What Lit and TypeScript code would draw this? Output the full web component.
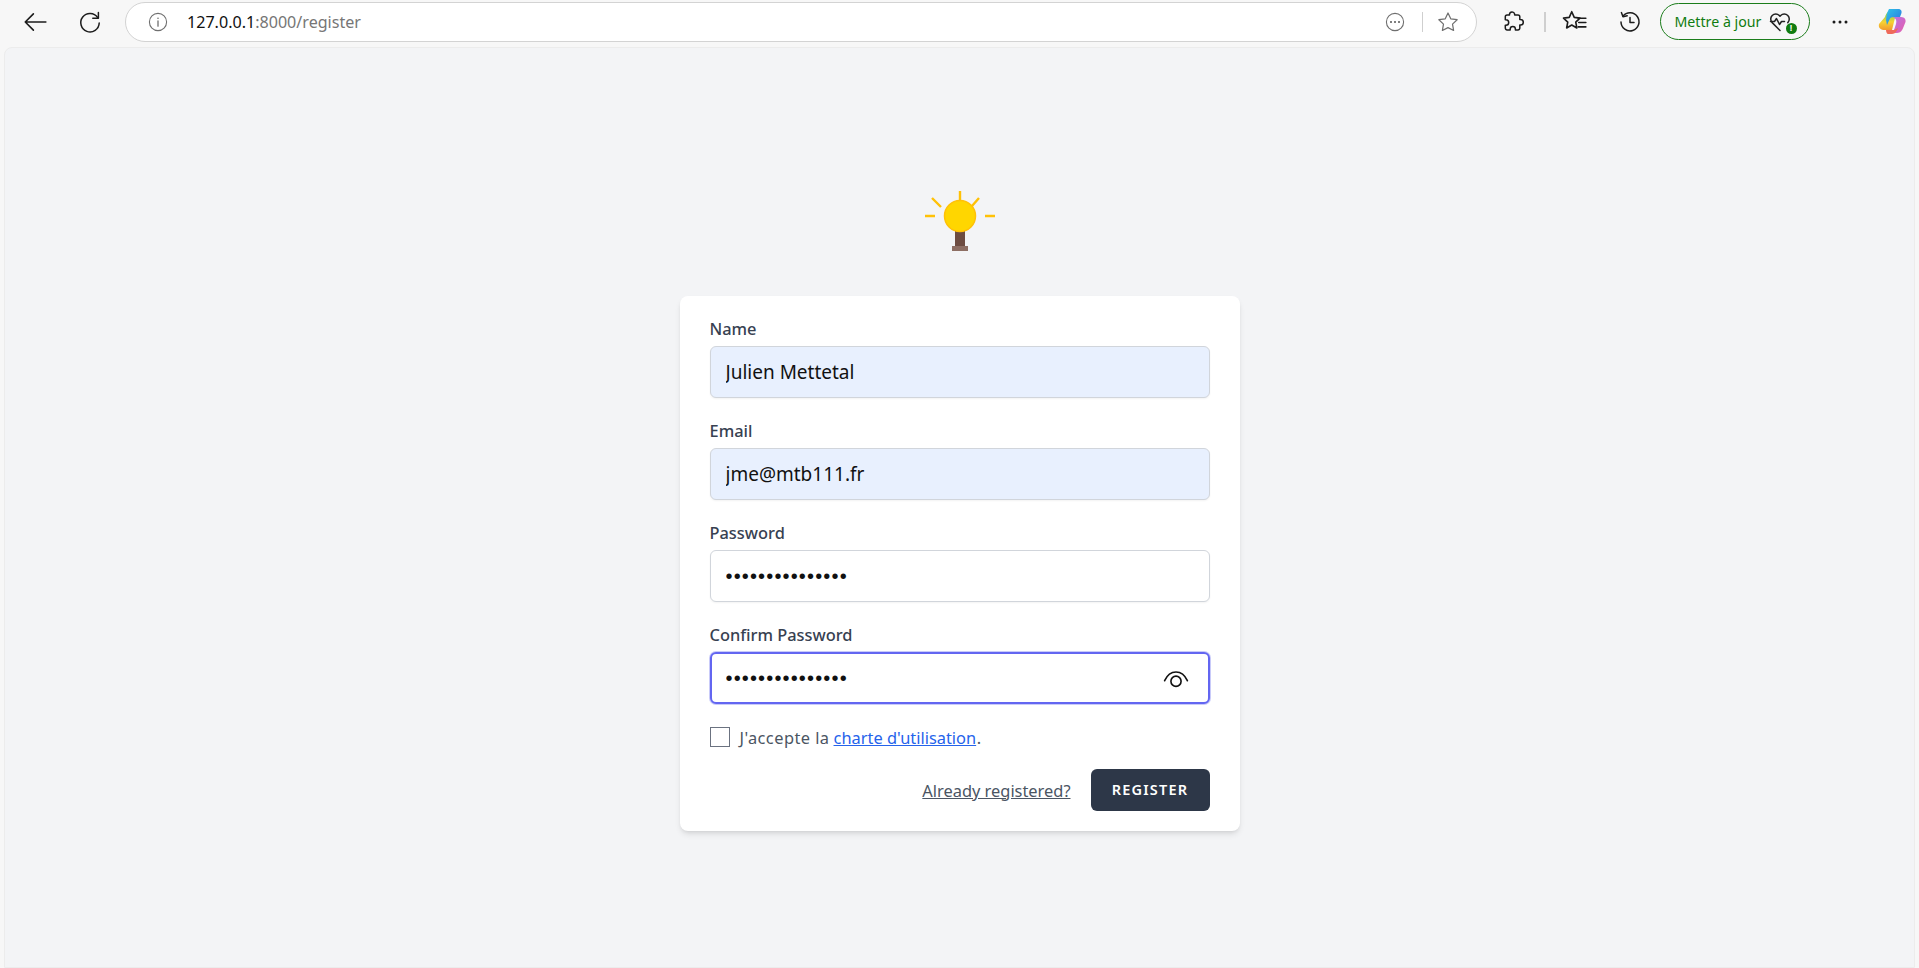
import { html, css, LitElement, svg } from "lit";
import { customElement } from "lit/decorators.js";

const stroke = (body: unknown, size = 24, box = "0 0 24 24") => html`<svg width=${size} height=${size} viewBox=${box} fill="none" stroke="currentColor" stroke-width="1.5" stroke-linecap="round" stroke-linejoin="round">${body}</svg>`;

const icons = {
  back: svg`<path d="M22 12H3M10.500 4.500 3 12l7.500 7.500"/>`,
  reload: svg`<path d="M19.600 7.500A9.200 9.200 0 1 0 21.200 13"/><path d="M20.400 2.600v5.600h-5.600"/>`,
  info: svg`<circle cx="10" cy="10" r="8.600" stroke="#6f6f6f" stroke-width="1.100"/><path d="M10 9v5.200" stroke="#6f6f6f" stroke-width="1.300"/><circle cx="10" cy="6.200" r=".8" fill="#6f6f6f" stroke="none"/>`,
  more: svg`<circle cx="10" cy="10" r="8.600" stroke="#6f6f6f" stroke-width="1.100"/><circle cx="6" cy="10" r="1" fill="#555" stroke="none"/><circle cx="10" cy="10" r="1" fill="#555" stroke="none"/><circle cx="14" cy="10" r="1" fill="#555" stroke="none"/>`,
  star: svg`<path d="m10 1.800 2.500 5.300 5.800.8-4.200 4 1 5.800L10 15.100l-5.100 2.600 1-5.800-4.200-4 5.800-.8z" stroke="#6f6f6f" stroke-width="1.100"/>`,
  puzzle: svg`<path d="M8.500 4.200a2.600 2.600 0 0 1 5.100-.3l.1 1.100h3.300a1.800 1.800 0 0 1 1.800 1.800v2.700h.7a2.800 2.800 0 0 1 0 5.600h-.7v3a1.800 1.800 0 0 1-1.800 1.800h-2.600v-.8a2.600 2.600 0 0 0-5.200 0v.8H6.100a1.800 1.800 0 0 1-1.800-1.800v-2.800h.6a2.800 2.800 0 0 0 0-5.600h-.6V6.800A1.800 1.800 0 0 1 6.100 5h2.400z"/>`,
  favs: svg`<path d="m9 2.500 2.300 5.200 5.300.7-3.900 3.700 1 5.400L9 14.800l-4.700 2.700 1-5.400-3.900-3.700 5.300-.7z"/><path d="M15 8.500h7M15.500 12.500H22M15 16.500h7"/>`,
  history: svg`<path d="M5 6.200A9 9 0 1 1 3 12"/><path d="M3.400 2.600 5 6.800l4.200-1"/><path d="M12 7.500V12.600h4"/>`,
  eye: svg`<path d="M1.500 14.500C4 9 7.500 6.500 12 6.500s8 2.500 10.500 8"/><circle cx="12" cy="15" r="4.700"/>`,
  heart: svg`<path d="M12 20.500 4.200 12.600A5 5 0 0 1 11.300 5.500l.7.8.7-.8a5 5 0 0 1 7.100 7.100"/><path d="M2.500 11.500h4l2-3 3 6 2-3h3"/>`,
};

@customElement("app-root")
export class AppRoot extends LitElement {
  static styles = css`
    :host { display: block; height: 968px; overflow: hidden; background: #f7f7f7; font-family: "Noto Sans", sans-serif; }
    .toolbar { height: 47px; box-sizing: border-box; padding-bottom: 4px; display: flex; align-items: center; color: #1c1c1c; }
    .nav { width: 36px; height: 36px; display: flex; align-items: center; justify-content: center; flex: none; }
    .back { margin-left: 17px; }
    .reload { margin-left: 19px; }
    .address { flex: none; width: 1352px; height: 40px; box-sizing: border-box; margin: 0 0 0 17px; border: 1.5px solid #d3d3d3; border-radius: 20px; background: #fff; display: flex; align-items: center; padding: 0 17px 0 22px; font-size: 16.1px; }
    .url { margin-left: 19px; flex: 1; color: #111; }
    .url span { color: #767676; }
    .sep { width: 1.5px; height: 20px; background: #cfcfcf; margin: 0 14px 0 17px; flex: none; }
    .ext { margin-left: 18px; }
    .tool-sep { margin: 0 11px 0 13px; }
    .history { margin-left: 19px; }
    .update { flex: none; margin-left: 12px; width: 150px; height: 37px; box-sizing: border-box; border: 1.5px solid #1b7d1b; border-radius: 19px; display: flex; align-items: center; gap: 7px; padding-left: 14px; color: #107c10; font-size: 14.2px; position: relative; }
    .update svg { color: #222; }
    .badge { position: absolute; left: 125px; top: 19px; width: 11px; height: 11px; border-radius: 50%; background: #107c10; color: #fff; font: 700 9px/11px "Liberation Sans", sans-serif; text-align: center; }
    .more { margin-left: 12px; }
    .copilot { margin-left: 20px; display: flex; }
    .page { height: 921px; box-sizing: border-box; margin: 0 4px; background: #f3f4f6; border: 1px solid #ececec; border-radius: 8px 8px 0 0; display: flex; flex-direction: column; align-items: center; padding-top: 140px; }
    .logo { display: block; }
    .card { width: 560px; height: 535px; box-sizing: border-box; margin-top: 44px; padding: 22px 30px 0; background: #fff; border-radius: 8px; box-shadow: 0 4px 6px -1px rgba(0,0,0,.1), 0 2px 4px -2px rgba(0,0,0,.1); }
    label.name { display: block; height: 26px; font-size: 16.4px; font-weight: 500; line-height: 22px; color: #374151; }
    .field { display: block; position: relative; height: 52px; margin-bottom: 22px; margin-top: 2px; }
    input.text { display: block; width: 100%; height: 100%; box-sizing: border-box; border: 1px solid #d1d5db; border-radius: 6px; padding: 0 15px; outline: none; font: 19px "Noto Sans", sans-serif; color: #111; background: #fff; box-shadow: 0 1px 2px rgba(0,0,0,.05); }
    input.filled { background: #e8f0fe; }
    input[type="password"] { font-size: 20px; letter-spacing: 1.15px; font-family: "Liberation Sans", sans-serif; }
    input.focus { border: 2px solid #6366f1; padding: 0 14px; box-shadow: 0 0 0 1px #c9cbf9; }
    .eye { position: absolute; right: 9px; top: 0; bottom: 0; width: 50px; display: flex; align-items: center; justify-content: center; color: #111; }
    .terms { display: flex; align-items: center; height: 22px; font-size: 16.4px; color: #4b5563; }
    .box { width: 20px; height: 20px; box-sizing: border-box; border: 1px solid #6b7280; margin-right: 10px; }
    .lead { letter-spacing: .45px; }
    .terms a { color: #2563eb; margin-left: 4px; margin-right: .5px; text-decoration: underline; }
    .actions { display: flex; justify-content: flex-end; align-items: center; margin-top: 21px; }
    .login { color: #4b5563; font-size: 16.4px; text-decoration: underline; margin-right: 20px; }
    .submit { width: 119px; height: 42px; border: 0; border-radius: 6px; background: #2d3748; color: #fff; font: 600 14.5px "Noto Sans", sans-serif; letter-spacing: 1.2px; padding: 0 0 2px; }
  `;

  render() {
    return html`
      <div class="toolbar">
        <div class="nav back">${stroke(icons.back, 26)}</div>
        <div class="nav reload">${stroke(icons.reload, 24)}</div>
        <div class="address">
          ${stroke(icons.info, 20, "0 0 20 20")}
          <div class="url">127.0.0.1<span>:8000/register</span></div>
          ${stroke(icons.more, 20, "0 0 20 20")}
          <div class="sep"></div>
          ${stroke(icons.star, 22, "0 0 20 20")}
        </div>
        <div class="nav ext">${stroke(icons.puzzle, 24)}</div>
        <div class="sep tool-sep"></div>
        <div class="nav">${stroke(icons.favs, 26)}</div>
        <div class="nav history">${stroke(icons.history, 24)}</div>
        <div class="update">
          <span>Mettre à jour</span>
          ${stroke(icons.heart, 24)}
          <span class="badge">!</span>
        </div>
        <div class="nav more">
          <svg width="16" height="4" viewBox="0 0 16 4" fill="#1c1c1c"><circle cx="2" cy="2" r="1.500"/><circle cx="8" cy="2" r="1.500"/><circle cx="14" cy="2" r="1.500"/></svg>
        </div>
        <div class="copilot">
          <svg width="28" height="28" viewBox="0 0 28 28">
            <defs>
              <linearGradient id="cA" x1="0" y1="0" x2="1" y2="1"><stop offset="0" stop-color="#2fc4e8"/><stop offset="1" stop-color="#2b6fe0"/></linearGradient>
              <linearGradient id="cB" x1="0" y1="0" x2="0" y2="1"><stop offset="0" stop-color="#4fc96a"/><stop offset=".6" stop-color="#f6d333"/><stop offset="1" stop-color="#f29a2e"/></linearGradient>
              <linearGradient id="cC" x1="0" y1="0" x2="1" y2="1"><stop offset="0" stop-color="#b873e6"/><stop offset="1" stop-color="#e85da8"/></linearGradient>
            </defs>
            <path d="M7 9c1-3 3-7 7-7h5l-5 20H7c-4 0-7-2-6-6z" fill="url(#cB)"/>
            <path d="M11 1h9c3 0 4 2 3.500 4L22 9h-7c-2 0-3 1-3.500 2.500L9 17l-1-5c.5-4 1-8 3-11z" fill="url(#cA)"/>
            <path d="M15 9h8c4 0 5 3 4.500 5l-2 5c-1 3-3 6-6.500 6h-4l3-9c.5-2 1-5-3-7z" fill="url(#cC)"/>
            <path d="M8 22h8l4-2c-1 3-3 6-6 6H10c-1 0-2-2-2-4z" fill="#ef6a5a"/>
          </svg>
        </div>
      </div>
      <main class="page">
        <svg class="logo" width="80" height="64" viewBox="920 188 80 64">
          <g stroke="#ffc107" stroke-width="2.400">
            <path d="M960 191v9M925 216h10M985 216h10M932 198l9 9M979 198l-7 8"/>
          </g>
          <rect x="955" y="230" width="10" height="17" fill="#6d4c41"/>
          <rect x="952" y="246" width="16" height="5" fill="#8d6e63"/>
          <circle cx="960" cy="216" r="15.500" fill="#ffd600" stroke="#ffc107" stroke-width="1.500"/>
        </svg>
        <form class="card">
          <label class="name">Name</label>
          <div class="field"><input class="text filled" value="Julien Mettetal" /></div>
          <label class="name">Email</label>
          <div class="field"><input class="text filled" value="jme@mtb111.fr" /></div>
          <label class="name">Password</label>
          <div class="field"><input class="text" type="password" value="aaaaaaaaaaaaaaa" /></div>
          <label class="name">Confirm Password</label>
          <div class="field">
            <input class="text focus" type="password" value="aaaaaaaaaaaaaaa" />
            <span class="eye">${stroke(icons.eye, 26)}</span>
          </div>
          <div class="terms"><span class="box"></span><span class="lead">J'accepte la</span><a>charte d'utilisation</a>.</div>
          <div class="actions">
            <a class="login">Already registered?</a>
            <button class="submit" type="button">REGISTER</button>
          </div>
        </form>
      </main>
    `;
  }
}
